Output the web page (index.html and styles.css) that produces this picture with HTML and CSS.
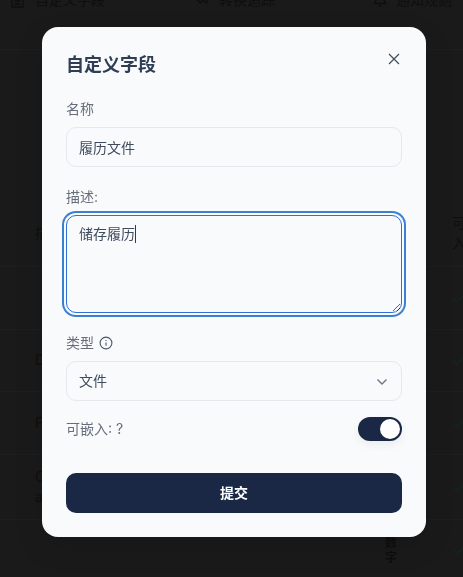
FILE: index.html
```html
<!DOCTYPE html>
<html lang="zh">
<head>
<meta charset="utf-8">
<title>自定义字段</title>
<link rel="stylesheet" href="styles.css">
</head>
<body>
<div class="page">
  <nav class="tabs">
    <div class="tab">
      <svg class="tab-icon" viewBox="0 0 16 16"><path d="M1 1h11v14H1zM3.500 6h6M3.500 9h6M3.500 12h6"/></svg>
      <span>自定义字段</span>
    </div>
    <div class="tab">
      <svg class="tab-icon" viewBox="0 0 16 16"><path d="M.5 5l4.500 6 3-3 3 3 4-6"/></svg>
      <span>转换追踪</span>
    </div>
    <div class="tab">
      <svg class="tab-icon" viewBox="0 0 16 16"><path d="M2.500 11.500c1-1 1.500-3 1.500-5a4 4 0 0 1 8 0c0 2 .5 4 1.500 5zM6.500 14h3"/></svg>
      <span>通知规则</span>
    </div>
  </nav>
  <div class="table">
    <div class="row row-head"><span class="cell-name">描述</span><span class="cell-type"></span><span class="cell-flag">可入</span></div>
    <div class="row"><span class="cell-name"></span><span class="cell-type"></span><svg class="check" viewBox="0 0 16 16"><path d="M3 8l4 4 7-7"/></svg></div>
    <div class="row"><span class="cell-name">D</span><span class="cell-type"></span><svg class="check" viewBox="0 0 16 16"><path d="M3 8l4 4 7-7"/></svg></div>
    <div class="row"><span class="cell-name">F</span><span class="cell-type"></span><svg class="check" viewBox="0 0 16 16"><path d="M3 8l4 4 7-7"/></svg></div>
    <div class="row row-tall"><span class="cell-name">C<br>a</span><span class="cell-type"></span><svg class="check" viewBox="0 0 16 16"><path d="M3 8l4 4 7-7"/></svg></div>
    <div class="row"><span class="cell-name"></span><span class="cell-type">数字</span><svg class="check" viewBox="0 0 16 16"><path d="M3 8l4 4 7-7"/></svg></div>
  </div>
</div>

<div class="overlay">
  <form class="modal">
    <h2 class="modal-title">自定义字段</h2>
    <button type="button" class="close" aria-label="关闭">
      <svg viewBox="0 0 16 16"><path d="M3 3l10 10M13 3L3 13"/></svg>
    </button>

    <div class="field">
      <label class="label">名称</label>
      <input class="control text" type="text" value="履历文件">
    </div>

    <div class="field">
      <label class="label">描述:</label>
      <textarea class="control area">储存履历</textarea>
      <span class="caret"></span>
    </div>

    <div class="field">
      <label class="label">类型
        <svg class="info" viewBox="0 0 14 14"><circle cx="7" cy="7" r="5.900"/><path d="M7 6.500v3.300M7 4v.9"/></svg>
      </label>
      <div class="select-wrap">
        <select class="control select"><option>文件</option></select>
        <svg class="chevron" viewBox="0 0 16 16"><path d="M3.500 5.500l4.500 4.500 4.500-4.500"/></svg>
      </div>
    </div>

    <div class="toggle-row">
      <span class="label">可嵌入: ?</span>
      <span class="switch"><span class="knob"></span></span>
    </div>

    <button type="button" class="submit">提交</button>
  </form>
</div>
</body>
</html>
```

FILE: styles.css
```css
* { box-sizing: border-box; }

html, body {
  margin: 0;
  height: 100%;
  overflow: hidden;
  background: #1a1a1a;
  font-family: Inter, "Noto Sans CJK SC", sans-serif;
  font-size: 14px;
}

.page {
  height: 577px;
  overflow: hidden;
  color: #0e0e0e;
}

.tabs {
  display: grid;
  grid-template-columns: 184px 177px 1fr;
  height: 60px;
  margin-top: -10px;
  padding: 0 0 40px 11px;
  border-bottom: 1px solid #1e1e1e;
}

.tab {
  display: flex;
  align-items: center;
  gap: 8px;
  height: 20px;
  line-height: 20px;
}

.tab-icon {
  width: 16px;
  height: 16px;
  fill: none;
  stroke: #0e0e0e;
  stroke-width: 1.300;
}

.table {
  margin-top: 161px;
}

.row {
  display: flex;
  align-items: center;
  height: 62.500px;
  padding-left: 35px;
  border-bottom: 1px solid #1e1e1e;
  line-height: 20px;
}

.row-head {
  height: 56px;
  padding-bottom: 12px;
}

.row-tall {
  height: 65px;
}

.cell-name {
  width: 350px;
  flex: none;
}

.cell-type {
  width: 14px;
  flex: none;
  font-size: 12px;
  font-weight: 700;
  line-height: 15px;
}

.cell-flag {
  width: 14px;
  margin-left: 53px;
  flex: none;
}

.check {
  width: 16px;
  height: 16px;
  margin-left: 51px;
  flex: none;
  fill: none;
  stroke: #10261e;
  stroke-width: 1.500;
}

.overlay {
  position: fixed;
  inset: 0;
  display: flex;
  justify-content: center;
  align-items: flex-start;
  padding: 27px 0 0 5px;
}

.modal {
  position: relative;
  display: flex;
  flex-direction: column;
  width: 384px;
  height: 510px;
  padding: 24px;
  border-radius: 16px;
  background: #f9fafc;
  box-shadow: 0 10px 30px rgba(0, 0, 0, 0.1);
}

.modal-title {
  margin: 0 0 20px;
  font-size: 18px;
  line-height: 28px;
  font-weight: 700;
  color: #2f3e55;
}

.close {
  position: absolute;
  top: 24px;
  right: 24px;
  width: 16px;
  height: 16px;
  padding: 0;
  display: flex;
  border: 0;
  background: none;
}

.close svg {
  width: 16px;
  height: 16px;
  fill: none;
  stroke: #3f4b5f;
  stroke-width: 1.200;
}

.field {
  position: relative;
  display: flex;
  flex-direction: column;
  gap: 8px;
  margin-bottom: 20px;
}

.field:nth-of-type(3) {
  margin-bottom: 16px;
}

.label {
  display: flex;
  align-items: center;
  gap: 6px;
  height: 20px;
  font-size: 14px;
  line-height: 20px;
  color: #666e7c;
}

.control {
  display: block;
  width: 100%;
  height: 40px;
  padding: 0 12px 2px;
  border: 1px solid #e6e8ee;
  border-radius: 10px;
  background: #f9fafc;
  color: #3f4b5f;
  font: inherit;
  outline: none;
}

.text {
  padding-bottom: 0;
}

.area {
  height: 98px;
  padding: 8px 12px;
  border-color: #2f6fdc;
  line-height: 20px;
  box-shadow: 0 0 0 2px #f9fafc, 0 0 0 4px #3a80cf;
  resize: vertical;
}

.caret {
  position: absolute;
  left: 69px;
  top: 38px;
  width: 1px;
  height: 18px;
  background: #2d3a50;
}

.info {
  width: 14px;
  height: 14px;
  margin-left: -1px;
  fill: none;
  stroke: #4a5568;
  stroke-width: 1.100;
}

.select-wrap {
  position: relative;
}

.select {
  appearance: none;
}

.chevron {
  position: absolute;
  right: 12px;
  top: 12.500px;
  width: 16px;
  height: 16px;
  fill: none;
  stroke: #6b7585;
  stroke-width: 1.400;
}

.toggle-row {
  display: flex;
  align-items: center;
  justify-content: space-between;
  height: 24px;
  margin-bottom: 32px;
}

.switch {
  display: flex;
  justify-content: flex-end;
  align-items: center;
  width: 44px;
  height: 24px;
  padding: 2px;
  border-radius: 12px;
  background: #1a2845;
  box-shadow: 0 4px 10px rgba(0, 0, 0, 0.06);
}

.knob {
  width: 20px;
  height: 20px;
  border-radius: 50%;
  background: #fff;
}

.submit {
  height: 40px;
  padding: 0 0 2px;
  border: 0;
  border-radius: 10px;
  background: #1a2845;
  color: #fff;
  font: inherit;
  font-weight: 700;
}
```
